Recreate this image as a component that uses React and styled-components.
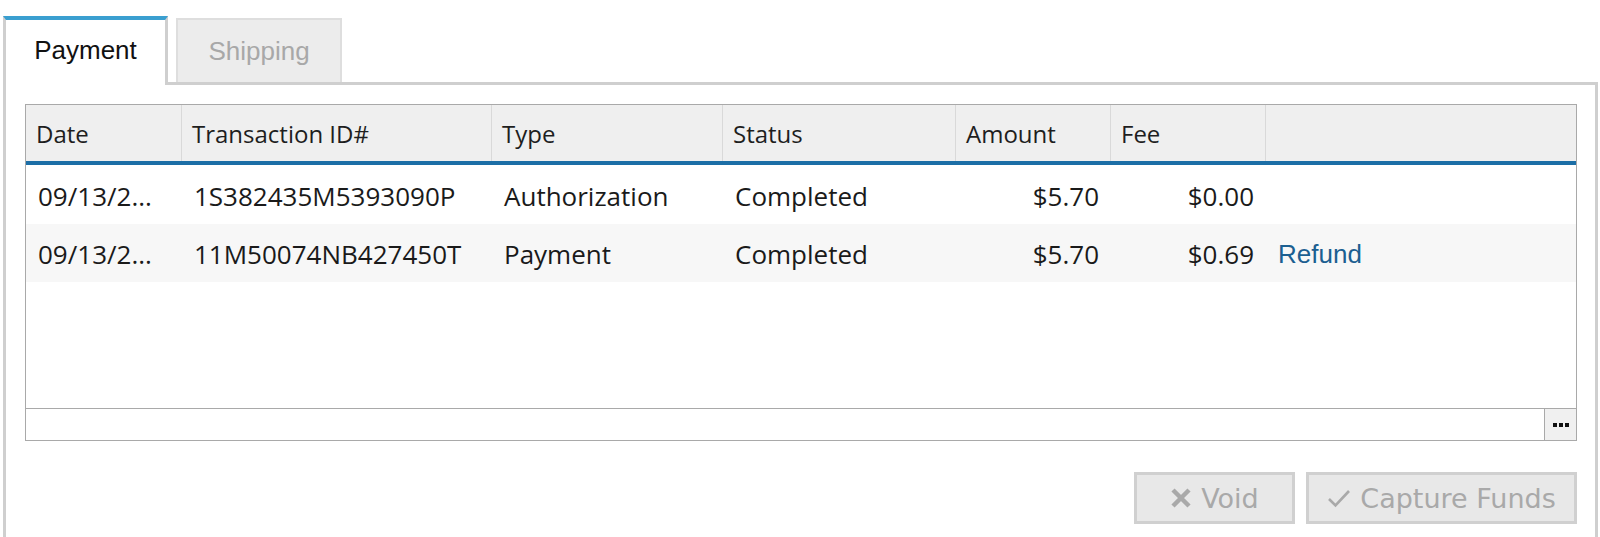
import styled, { createGlobalStyle } from 'styled-components';

const GlobalStyle = createGlobalStyle`
    html, body {
        margin: 0;
        padding: 0;
        background: #fff;
    }
    * {
        box-sizing: border-box;
    }
`

const columns = [
    { key: 'date', label: 'Date', width: '156px' },
    { key: 'id', label: 'Transaction ID#', width: '310px' },
    { key: 'type', label: 'Type', width: '231px' },
    { key: 'status', label: 'Status', width: '233px' },
    { key: 'amount', label: 'Amount', width: '155px', right: true },
    { key: 'fee', label: 'Fee', width: '155px', right: true },
    { key: 'action', label: '', width: '1fr' },
];

const rows = [
    { date: '09/13/2...', id: '1S382435M5393090P', type: 'Authorization', status: 'Completed', amount: '$5.70', fee: '$0.00' },
    { date: '09/13/2...', id: '11M50074NB427450T', type: 'Payment', status: 'Completed', amount: '$5.70', fee: '$0.69', action: 'Refund' },
];

const template = columns.map((c) => c.width).join(' ');

export default function App() {
    return (
        <Page>
            <GlobalStyle />
            <TabBar>
                <Tab $active>Payment</Tab>
                <Tab>Shipping</Tab>
            </TabBar>
            <Panel>
                <Grid>
                    <HeaderRow>
                        {columns.map((c) => (
                            <HeaderCell key={c.key}>{c.label}</HeaderCell>
                        ))}
                    </HeaderRow>
                    <Body>
                        {rows.map((r, i) => (
                            <Row key={r.id} $alt={i % 2 === 1}>
                                {columns.map((c) => (
                                    <Cell key={c.key} $right={c.right}>
                                        {c.key === 'action'
                                            ? r.action && <RefundLink href="#">{r.action}</RefundLink>
                                            : r[c.key]}
                                    </Cell>
                                ))}
                            </Row>
                        ))}
                    </Body>
                    <Footer>
                        <MoreButton>
                            <Dot /><Dot /><Dot />
                        </MoreButton>
                    </Footer>
                </Grid>
                <Actions>
                    <ActionButton $width="161px" disabled>
                        <svg width="22" height="20" viewBox="0 0 22 20">
                            <path d="M3 2 L19 18 M19 2 L3 18" stroke="#a9a9a9" strokeWidth="4.5" strokeLinecap="butt" />
                        </svg>
                        Void
                    </ActionButton>
                    <ActionButton $width="271px" disabled>
                        <svg width="24" height="20" viewBox="0 0 24 20">
                            <path d="M2 11 L8.5 17.5 L22 3" stroke="#a9a9a9" strokeWidth="2.6" fill="none" />
                        </svg>
                        Capture Funds
                    </ActionButton>
                </Actions>
            </Panel>
        </Page>
    )
}

const Page = styled.div`
    display: flex;
    flex-direction: column;
    height: 537px;
    overflow: hidden;
    padding: 16px 2px 0 3px;
`

const TabBar = styled.div`
    display: flex;
    align-items: flex-end;
    gap: 8px;
`

const Tab = styled.div`
    display: flex;
    align-items: center;
    justify-content: center;
    font-family: "Liberation Sans", Arial, sans-serif;
    font-size: 26px;
    ${({ $active }) => $active ? `
        position: relative;
        z-index: 1;
        width: 165px;
        height: 69px;
        margin-bottom: -3px;
        padding-bottom: 5px;
        background: #fff;
        color: #111;
        border-top: 4px solid #3a9fd0;
        border-left: 3px solid #cfcfcf;
        border-right: 3px solid #cfcfcf;
    ` : `
        width: 166px;
        height: 64px;
        padding-bottom: 0;
        background: #ececec;
        color: #a8a8a8;
        border: 2px solid #dedede;
        border-bottom: none;
    `}
`

const Panel = styled.div`
    flex: 1;
    display: flex;
    flex-direction: column;
    border: 3px solid #cfcfcf;
    border-bottom: none;
    padding: 19px 18px 0 19px;
`

const Grid = styled.div`
    display: flex;
    flex-direction: column;
    border: 1px solid #a9a9a9;
    font-family: "Open Sans", "Noto Sans", sans-serif;
`

const HeaderRow = styled.div`
    display: grid;
    grid-template-columns: ${template};
    height: 60px;
    background: #efefef;
    border-bottom: 4px solid #1c6ea6;
`

const HeaderCell = styled.div`
    display: flex;
    align-items: center;
    padding: 0 10px;
    font-size: 24px;
    color: #1e1e1e;
    border-right: 1px solid #d9d9d9;

    &:last-child {
        border-right: none;
    }
`

const Body = styled.div`
    height: 243px;
    background: #fff;
`

const Row = styled.div`
    display: grid;
    grid-template-columns: ${template};
    height: ${({ $alt }) => $alt ? '58px' : '59px'};
    padding-top: 2px;
    background: ${({ $alt }) => $alt ? '#f7f7f7' : '#fff'};
`

const Cell = styled.div`
    display: flex;
    align-items: center;
    justify-content: ${({ $right }) => $right ? 'flex-end' : 'flex-start'};
    padding: 0 12px;
    font-size: 26px;
    color: #1a1a1a;
    white-space: nowrap;
`

const RefundLink = styled.a`
    font-family: "Liberation Sans", Arial, sans-serif;
    font-size: 26px;
    color: #1c5f91;
    text-decoration: none;
`

const Footer = styled.div`
    display: flex;
    justify-content: flex-end;
    height: 32px;
    border-top: 1px solid #a9a9a9;
`

const MoreButton = styled.div`
    display: flex;
    align-items: center;
    justify-content: center;
    gap: 2px;
    width: 32px;
    background: #f0f0f0;
    border-left: 1px solid #a9a9a9;
`

const Dot = styled.span`
    width: 4px;
    height: 4px;
    background: #111;
`

const Actions = styled.div`
    display: flex;
    justify-content: flex-end;
    gap: 11px;
    margin-top: 31px;
`

const ActionButton = styled.button`
    display: flex;
    align-items: center;
    justify-content: center;
    gap: 9px;
    width: ${({ $width }) => $width};
    height: 52px;
    padding: 0;
    background: #e8e8e8;
    border: 3px solid #d0d0d0;
    color: #a9a9a9;
    font-family: "DejaVu Sans", Verdana, sans-serif;
    font-size: 27px;
    cursor: default;
`
